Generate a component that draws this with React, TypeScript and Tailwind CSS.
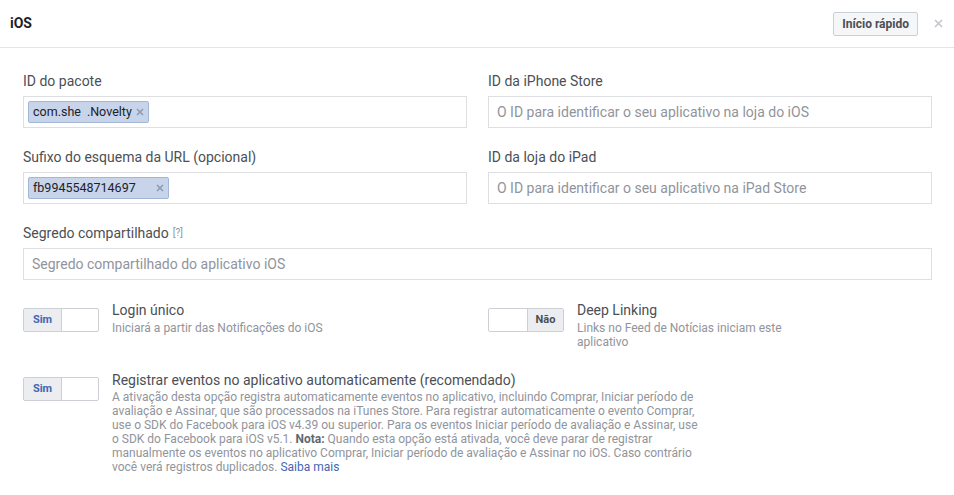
import React from "react";

function Label({ children }: { children: React.ReactNode }) {
  return <div className="h-[18px] flex items-center text-[14px] leading-[18px] text-[#4b4f56] mb-[6px]">{children}</div>;
}

function TextInput({ placeholder }: { placeholder: string }) {
  return (
    <div className="h-[32px] border border-[#dddfe2] bg-white flex items-center px-[8px] text-[14px] text-[#90949c]">
      {placeholder}
    </div>
  );
}

function Chip({ a, b, gap, xgap }: { a: string; b?: string; gap: string; xgap: string }) {
  return (
    <div className="h-[22px] flex items-center bg-[#c7d4e9] border border-[#a2b7d8] rounded-[2px] pl-[4px] pr-[4px] text-[12.5px] text-[#1d2129]">
      <span>{a}</span>
      {b ? <span className={gap} /> : null}
      {b ? <span>{b}</span> : null}
      <span className={xgap} />
      <svg width="8" height="8" viewBox="0 0 8 8" className="shrink-0">
        <path d="M1 1L7 7M7 1L1 7" stroke="#8c9bb3" strokeWidth="1.6" />
      </svg>
    </div>
  );
}

function ChipInput({ children }: { children: React.ReactNode }) {
  return (
    <div className="h-[32px] border border-[#dddfe2] bg-white flex items-center px-[4px]">{children}</div>
  );
}

function Toggle({ on }: { on: boolean }) {
  return (
    <div className="w-[76px] h-[24px] border border-[#ccd0d5] rounded-[2px] flex overflow-hidden shrink-0 bg-white">
      {on ? (
        <>
          <div className="w-[38px] bg-[#ebedf0] border-r border-[#ccd0d5] flex items-center justify-center text-[11px] font-bold text-[#4267b2]">
            Sim
          </div>
          <div className="flex-1" />
        </>
      ) : (
        <>
          <div className="flex-1" />
          <div className="w-[36px] bg-[#ebedf0] border-l border-[#ccd0d5] flex items-center justify-center text-[11px] font-bold text-[#4b4f56]">
            Não
          </div>
        </>
      )}
    </div>
  );
}

export default function App() {
  return (
    <div className="w-[954px] h-[495px] bg-white overflow-hidden" style={{ fontFamily: "Roboto, 'Liberation Sans', sans-serif" }}>
      <div className="h-[48px] border-b border-[#e5e5e5] flex items-center pl-[10px] pr-[11px]">
        <div className="text-[14px] font-bold text-[#1d2129]">iOS</div>
        <div className="flex-1" />
        <div className="h-[24px] px-[8px] border border-[#ccd0d5] bg-[#f5f6f7] rounded-[2px] flex items-center text-[12px] font-bold text-[#4b4f56]">
          Início rápido
        </div>
        <div className="ml-[16px] flex items-center justify-center">
          <svg width="9" height="9" viewBox="0 0 9 9">
            <path d="M1 1L8 8M8 1L1 8" stroke="#c4c7cc" strokeWidth="1.7" />
          </svg>
        </div>
      </div>
      <div className="pl-[23px] pr-[22px] pt-[24px]">
        <div className="grid grid-cols-2 gap-x-[21px] gap-y-[20px]">
          <div>
            <Label>ID do pacote</Label>
            <ChipInput>
              <Chip a="com.she" b=".Novelty" gap="w-[6px]" xgap="w-[4px]" />
            </ChipInput>
          </div>
          <div>
            <Label>ID da iPhone Store</Label>
            <TextInput placeholder="O ID para identificar o seu aplicativo na loja do iOS" />
          </div>
          <div>
            <Label>Sufixo do esquema da URL (opcional)</Label>
            <ChipInput>
              <Chip a="fb9945548714697" gap="" xgap="w-[20px]" />
            </ChipInput>
          </div>
          <div>
            <Label>ID da loja do iPad</Label>
            <TextInput placeholder="O ID para identificar o seu aplicativo na iPad Store" />
          </div>
          <div className="col-span-2">
            <Label>
              Segredo compartilhado <span className="ml-[4px] text-[10px] leading-none text-[#90949c]">[?]</span>
            </Label>
            <TextInput placeholder="Segredo compartilhado do aplicativo iOS" />
          </div>
        </div>

        <div className="grid grid-cols-2 gap-x-[21px] mt-[22px]">
          <div className="flex gap-[13px]">
            <div className="pt-[6px]">
              <Toggle on />
            </div>
            <div>
              <div className="text-[14px] leading-[16px] text-[#4b4f56]">Login único</div>
              <div className="mt-[3px] text-[12px] leading-[14px] text-[#90949c] max-w-[240px]">
                Iniciará a partir das Notificações do iOS
              </div>
            </div>
          </div>
          <div className="flex gap-[13px]">
            <div className="pt-[6px]">
              <Toggle on={false} />
            </div>
            <div>
              <div className="text-[14px] leading-[16px] text-[#4b4f56]">Deep Linking</div>
              <div className="mt-[3px] text-[12px] leading-[14px] text-[#90949c] max-w-[230px]">
                Links no Feed de Notícias iniciam este aplicativo
              </div>
            </div>
          </div>
        </div>

        <div className="flex gap-[13px] mt-[23px]">
          <div className="pt-[5px]">
            <Toggle on />
          </div>
          <div>
            <div className="text-[14px] leading-[16px] text-[#4b4f56]">
              Registrar eventos no aplicativo automaticamente (recomendado)
            </div>
            <div className="mt-[2px] text-[12px] leading-[14px] text-[#90949c] w-[592px]">
              A ativação desta opção registra automaticamente eventos no aplicativo, incluindo Comprar, Iniciar período de
              avaliação e Assinar, que são processados na iTunes Store. Para registrar automaticamente o evento Comprar,
              use o SDK do Facebook para iOS v4.39 ou superior. Para os eventos Iniciar período de avaliação e Assinar, use
              o SDK do Facebook para iOS v5.1. <span className="font-bold text-[#606770]">Nota:</span> Quando esta opção está ativada, você deve parar de registrar
              manualmente os eventos no aplicativo Comprar, Iniciar período de avaliação e Assinar no iOS. Caso contrário
              você verá registros duplicados. <span className="text-[#4267b2]">Saiba mais</span>
            </div>
          </div>
        </div>
      </div>
    </div>
  );
}
